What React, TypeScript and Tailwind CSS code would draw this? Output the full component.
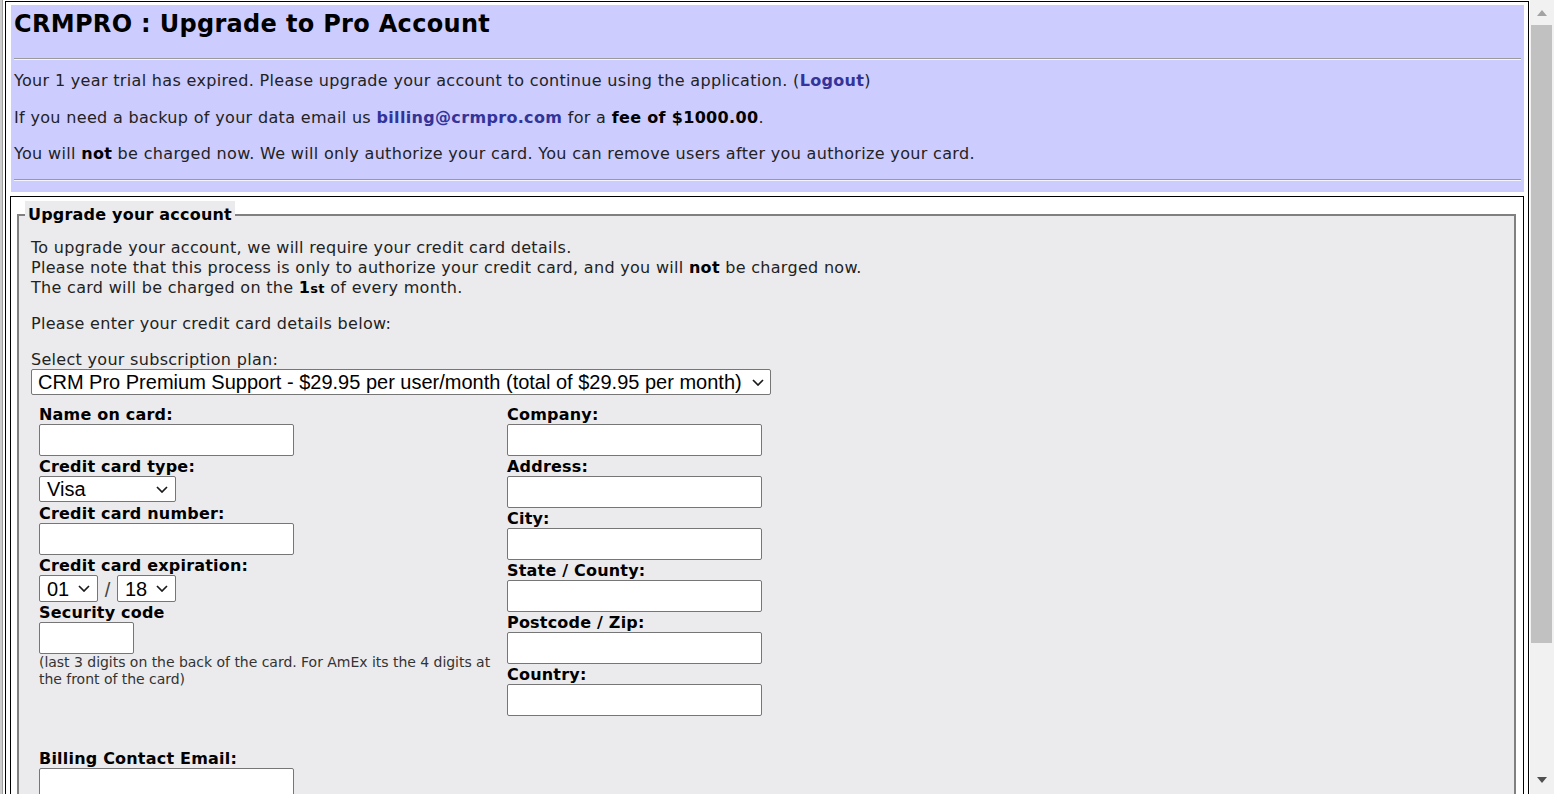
import React from "react";

const Chevron: React.FC = () => (
  <svg width="12" height="7" viewBox="0 0 12 7" className="shrink-0">
    <path d="M1 1l5 5 5-5" stroke="#1a1a1a" strokeWidth="1.7" fill="none" />
  </svg>
);

const Field: React.FC<{ label: string; className?: string; children: React.ReactNode }> = ({ label, className, children }) => (
  <div className={className}>
    <div className="text-[16px] leading-[18px] font-bold tracking-[0.2px] text-black whitespace-nowrap">{label}</div>
    {children}
  </div>
);

const TextBox: React.FC<{ className?: string }> = ({ className }) => (
  <input type="text" className={`block h-[32px] border border-[#767676] rounded-[2px] bg-white ${className ?? "w-[255px]"}`} />
);

const App: React.FC = () => {
  const right = ["Company:", "Address:", "City:", "State / County:", "Postcode / Zip:", "Country:"];

  return (
    <div className="flex h-[794px] w-full overflow-hidden bg-white font-['DejaVu_Sans',Verdana,sans-serif] text-[#222]">
      <div className="w-[2px] shrink-0 bg-[#cdcdcd]" />
      <div className="w-[1px] shrink-0 bg-[#a0a0a0]" />

      <div className="flex-1 pt-[1px]">
        <div className="ml-[2px] mr-[1px] border border-black pl-[5px] pr-[4px] pt-[3px] min-h-[900px]">
          {/* header */}
          <div className="bg-[#ccccff] px-[3px] pt-[5px] pb-[11px]">
            <div className="text-[24px] leading-[28px] font-bold tracking-[0.32px] text-black">CRMPRO : Upgrade to Pro Account</div>
            <div className="mt-[20px] border-t border-t-[#9a9a9a] border-b border-b-[#f4f4ff]" />
            <div className="tracking-[0.33px] text-[16px] leading-[20px]">
              <p className="mt-[11px]">
                Your 1 year trial has expired. Please upgrade your account to continue using the application. (
                <a className="font-bold text-[#333399]">Logout</a>)
              </p>
              <p className="mt-[17px]">
                If you need a backup of your data email us <a className="font-bold text-[#333399]">billing@crmpro.com</a> for a{" "}
                <b className="text-black">fee of $1000.00</b>.
              </p>
              <p className="mt-[16px]">
                You will <b className="text-black">not</b> be charged now. We will only authorize your card. You can remove users after you authorize your card.
              </p>
            </div>
            <div className="mt-[15px] border-t border-t-[#9a9a9a] border-b border-b-[#f4f4ff]" />
          </div>

          {/* form cell */}
          <div className="-ml-[1px] mt-[4px] border border-black pl-[6px] pr-[7px] pt-[4px] min-h-[700px]">
            <fieldset className="border-2 border-[#808080] bg-[#ebebed] pl-[12px] pt-[9px] min-h-[620px]">
              <legend className="-ml-[6px] bg-[#ebebed] px-[3px] text-[16px] leading-[27px] font-bold tracking-[0.2px] text-black">
                Upgrade your account
              </legend>

              <div className="text-[16px] leading-[20px] tracking-[0.3px]">
                <div className="mt-[1px]">To upgrade your account, we will require your credit card details.</div>
                <div>
                  Please note that this process is only to authorize your credit card, and you will <b className="text-black">not</b> be charged now.
                </div>
                <div>
                  The card will be charged on the{" "}
                  <b className="text-black">
                    1<span className="text-[13px]">st</span>
                  </b>{" "}
                  of every month.
                </div>
                <div className="mt-[15px]">Please enter your credit card details below:</div>
                <div className="mt-[16px] leading-[19px]">Select your subscription plan:</div>
              </div>

              <div className="flex h-[26px] w-[740px] items-center justify-between rounded-[2px] border border-[#767676] bg-white pl-[6px] pr-[6px] font-['Liberation_Sans',Arial,sans-serif] text-[20px] leading-[22px] text-black">
                <span>CRM Pro Premium Support - $29.95 per user/month (total of $29.95 per month)</span>
                <Chevron />
              </div>

              <div className="mt-[11px] ml-[8px] flex">
                <div className="w-[468px] shrink-0">
                  <Field label="Name on card:">
                    <TextBox />
                  </Field>
                  <Field label="Credit card type:" className="mt-[2px]">
                    <div className="flex h-[26px] w-[137px] items-center justify-between rounded-[2px] border border-[#767676] bg-white pl-[7px] pr-[7px] font-['Liberation_Sans',Arial,sans-serif] text-[20px] leading-[22px] text-black">
                      <span>Visa</span>
                      <Chevron />
                    </div>
                  </Field>
                  <Field label="Credit card number:" className="mt-[3px]">
                    <TextBox />
                  </Field>
                  <Field label="Credit card expiration:" className="mt-[2px]">
                    <div className="flex items-end font-['Liberation_Sans',Arial,sans-serif] text-[20px] leading-[22px] text-black">
                      <div className="flex h-[27px] w-[59px] items-center justify-between rounded-[2px] border border-[#767676] bg-white pl-[7px] pr-[7px]">
                        <span>01</span>
                        <Chevron />
                      </div>
                      <span className="w-[19px] text-center leading-[24px] text-[#444]">/</span>
                      <div className="flex h-[27px] w-[59px] items-center justify-between rounded-[2px] border border-[#767676] bg-white pl-[7px] pr-[7px]">
                        <span>18</span>
                        <Chevron />
                      </div>
                    </div>
                  </Field>
                  <Field label="Security code" className="mt-[2px]">
                    <TextBox className="w-[95px]" />
                  </Field>
                  <div className="text-[14px] leading-[17px] tracking-[-0.03px] text-[#333] whitespace-nowrap">
                    (last 3 digits on the back of the card. For AmEx its the 4 digits at
                    <br />
                    the front of the card)
                  </div>
                </div>

                <div className="shrink-0">
                  {right.map((label, i) => (
                    <Field key={label} label={label} className={i === 0 ? "" : "mt-[2px]"}>
                      <TextBox />
                    </Field>
                  ))}
                </div>
              </div>

              <Field label="Billing Contact Email:" className="mt-[34px] ml-[8px]">
                <TextBox />
              </Field>
            </fieldset>
          </div>
        </div>
      </div>

      {/* scrollbar */}
      <div className="flex w-[24px] shrink-0 flex-col bg-[#f1f1f1]">
        <div className="flex h-[25px] items-center justify-center">
          <svg width="10" height="6" viewBox="0 0 10 6">
            <path d="M0 6L5 0l5 6z" fill="#a3a3a3" />
          </svg>
        </div>
        <div className="ml-[1px] h-[618px] w-[21px] bg-[#c1c1c1]" />
        <div className="flex-1" />
        <div className="flex h-[28px] items-center justify-center">
          <svg width="10" height="6" viewBox="0 0 10 6">
            <path d="M0 0h10L5 6z" fill="#505050" />
          </svg>
        </div>
      </div>
    </div>
  );
};

export default App;
